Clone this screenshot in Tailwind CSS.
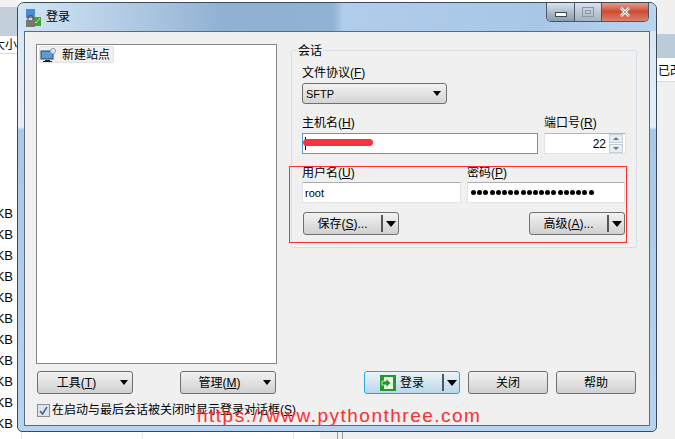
<!DOCTYPE html>
<html lang="en">
<head>
    <meta charset="UTF-8">
    <title>登录</title>
    <script src="https://cdn.jsdelivr.net/npm/@tailwindcss/browser@4"></script>
</head>
<body class="relative w-[675px] h-[439px] overflow-hidden bg-white text-black text-[12px] leading-[14px] font-['Liberation_Sans','Noto_Sans_CJK_SC',sans-serif]">

    <!-- File manager behind the dialog, left side -->
    <div class="absolute left-0 top-0 w-[17px] h-[439px] flex flex-col">
        <div class="h-[7px] bg-[#f2f2f2]"></div>
        <div class="h-[29px] bg-[#c3cfda]"></div>
        <div class="h-[18px] bg-white border-b border-[#d8d8d8] overflow-hidden whitespace-nowrap flex justify-end items-center">大小</div>
        <div class="flex flex-col pt-[149px] items-end pr-[4px] text-[13px]">
            <span class="h-[21px] leading-[21px]">KB</span>
            <span class="h-[21px] leading-[21px]">KB</span>
            <span class="h-[21px] leading-[21px]">KB</span>
            <span class="h-[21px] leading-[21px]">KB</span>
            <span class="h-[21px] leading-[21px]">KB</span>
            <span class="h-[21px] leading-[21px]">KB</span>
            <span class="h-[21px] leading-[21px]">KB</span>
            <span class="h-[21px] leading-[21px]">KB</span>
            <span class="h-[21px] leading-[21px]">KB</span>
            <span class="h-[21px] leading-[21px]">KB</span>
            <span class="h-[21px] leading-[21px]">KB</span>
        </div>
    </div>

    <!-- Right side -->
    <div class="absolute left-[656px] top-0 w-[19px] h-[439px] flex flex-col bg-[#f0f0f0]">
        <div class="h-[34px]"></div>
        <div class="h-[24px] bg-[#bccbd9]"></div>
        <div class="h-[24px] bg-white border-b border-[#d8d8d8] overflow-hidden whitespace-nowrap pl-[2px] pt-[6px]">已改</div>
    </div>

    <!-- Strip below the dialog, with the list's column lines -->
    <div class="absolute left-0 top-[432px] w-[675px] h-[7px] flex">
        <div class="w-[22px] border-r border-[#e6e6e6]"></div>
        <div class="w-[121px] border-r border-[#e6e6e6]"></div>
        <div class="w-[151px] border-r border-[#e6e6e6]"></div>
        <div class="w-[26px]"></div>
        <div class="flex-1 bg-[#f0f0f0] flex pl-[17px] gap-[4px]">
            <div class="w-px bg-[#9a9a9a]"></div>
            <div class="w-px bg-[#9a9a9a]"></div>
        </div>
    </div>

    <!-- Dialog -->
    <div class="absolute left-[17px] top-[2px] w-[640px] h-[430px] rounded-t-[7px] rounded-b-[5px] border border-[#3c4a58] overflow-hidden bg-[linear-gradient(to_bottom,#d6e6f5_0,#e4eef7_124px,#a8c8e8_127px,#b6d4f2_100%)] flex flex-col px-[6px] pb-[6px]">
        <!-- Title bar -->
        <div class="h-[28px] -mx-[6px] px-[6px] flex items-center shrink-0 relative bg-[linear-gradient(to_right,#d3e5f5_0,#b4cde5_100px,#8fb0d2_210px,#90b2d5_315px,#b0cdeb_325px,#a8c6e6_520px,#b8d4ee_100%)]">
            <svg class="ml-[1px] mt-[1px]" width="17" height="20" viewBox="0 0 17 20">
                <rect x="1" y="1" width="9" height="9" fill="#4a88d8"/>
                <path d="M8 9h8v9H7z" fill="#3fa52e"/>
                <path d="M9 13l2 2 4-5" stroke="#bfe8a8" fill="none"/>
                <path d="M3 12v-2a2.5 2.5 0 0 1 5 0v2" fill="none" stroke="#555" stroke-width="1.2"/>
                <rect x="1" y="12" width="9" height="7" fill="#777"/>
            </svg>
            <span class="ml-[4px]">登录</span>
            <!-- Caption buttons -->
            <div class="absolute right-[7px] -top-[1px] w-[103px] h-[20px] flex rounded-b-[5px] border border-t-0 border-[#4a5663] overflow-hidden">
                <div class="w-[28px] border-r border-[#4a5663] bg-gradient-to-b from-[#dbe6ef] to-[#8c9cab] flex items-center justify-center">
                    <div class="w-[12px] h-[5px] mt-[5px] bg-white border border-[#3c4a58]"></div>
                </div>
                <div class="w-[27px] border-r border-[#4a5663] bg-gradient-to-b from-[#dbe6ef] to-[#a2b2c1] flex items-center justify-center">
                    <div class="w-[12px] h-[10px] border border-[#8a98a6] flex items-center justify-center"><div class="w-[6px] h-[4px] border border-[#8a98a6]"></div></div>
                </div>
                <div class="flex-1 bg-gradient-to-b from-[#e6a596] via-[#cf4b32] to-[#d9806a] flex items-center justify-center">
                    <svg width="12" height="10" viewBox="0 0 12 10"><path d="M2 1l8 8M10 1l-8 8" stroke="#fff" stroke-width="2.6" /><path d="M2 1l8 8M10 1l-8 8" stroke="#3d4d5a" stroke-width="0.5"/></svg>
                </div>
            </div>
        </div>

        <!-- Client area -->
        <div class="flex-1 border border-[#5d6a77] bg-[#f0f0f0] flex flex-col px-[11px] pt-[12px] pb-[8px] relative">
            <div class="flex">
                <!-- Site tree -->
                <div class="w-[241px] h-[320px] shrink-0 bg-white border border-[#828790] pt-[1px] pl-[2px]">
                    <div class="inline-flex items-center h-[17px] pr-[3px] rounded-[2px] bg-[#f0f0f0] border border-[#e2e2e2]">
                        <svg class="mr-[4px]" width="18" height="16" viewBox="0 0 18 16">
                            <rect x="1" y="4" width="12" height="8" fill="#5b9bd8" stroke="#33475c"/>
                            <path d="M5 13h5v1h2v1H3v-1h2z" fill="#222"/>
                            <circle cx="13" cy="4" r="2.6" fill="#dfe8f2" stroke="#8aa2bb"/>
                        </svg>
                        <span>新建站点</span>
                    </div>
                </div>

                <!-- Session group -->
                <div class="ml-[14px] mt-[6px] w-[346px] h-[198px] rounded-[2px] border border-[#d5dfe5] relative pl-[10px] pt-[15px] flex flex-col">
                    <span class="absolute left-[5px] -top-[7px] bg-[#f0f0f0] px-[1px]">会话</span>
                    <label class="h-[16px] block">文件协议(<u>F</u>)</label>
                    <div class="mt-px w-[145px] h-[21px] rounded-[3px] border border-[#707070] bg-gradient-to-b from-[#f2f2f2] to-[#d4d4d4] flex items-center justify-between px-[3px] pr-[5px] font-['Liberation_Sans'] text-[11px]">
                        <span>SFTP</span>
                        <span class="w-0 h-0 border-x-[4px] border-x-transparent border-t-[5px] border-t-black"></span>
                    </div>
                    <div class="mt-[12px] flex gap-[6px]">
                        <div class="flex flex-col w-[236px]">
                            <label class="h-[17px]">主机名(<u>H</u>)</label>
                            <div class="h-[21px] border border-[#5a9bc9] bg-white relative overflow-hidden">
                                <div class="w-px h-[13px] bg-black ml-[2px] mt-[3px]"></div>
                                <div class="absolute left-0 top-[5px] w-[70px] h-[7px] rounded-full bg-[#f8333c]"></div>
                            </div>
                        </div>
                        <div class="flex flex-col w-[82px]">
                            <label class="h-[17px]">端口号(<u>R</u>)</label>
                            <div class="h-[21px] border border-[#dfe3e8] border-t-[#b5b9bd] bg-white flex items-center justify-end pr-[2px]">
                                <span class="mr-[3px]">22</span>
                                <div class="w-[14px] h-[19px] flex flex-col gap-px">
                                    <div class="flex-1 bg-[#e8edf3] border border-[#c4ccd6] flex items-center justify-center"><span class="w-0 h-0 border-x-[3px] border-x-transparent border-b-[3px] border-b-[#6a7a8c]"></span></div>
                                    <div class="flex-1 bg-[#e8edf3] border border-[#c4ccd6] flex items-center justify-center"><span class="w-0 h-0 border-x-[3px] border-x-transparent border-t-[3px] border-t-[#6a7a8c]"></span></div>
                                </div>
                            </div>
                        </div>
                    </div>
                    <div class="mt-[12px] flex gap-[6px]">
                        <div class="flex flex-col w-[159px]">
                            <label class="h-[16px]">用户名(<u>U</u>)</label>
                            <div class="h-[21px] border border-[#dfe3e8] border-t-[#abadb3] bg-white flex items-center pl-[2px] font-['Liberation_Sans'] text-[11px]">root</div>
                        </div>
                        <div class="flex flex-col w-[158px]">
                            <label class="h-[16px]">密码(<u>P</u>)</label>
                            <div class="h-[21px] border border-[#dfe3e8] border-t-[#abadb3] bg-white flex items-center pl-[3px]">
                                <span class="flex gap-[1.2px]">
                                    <i class="size-[5px] rounded-full bg-black"></i><i class="size-[5px] rounded-full bg-black"></i><i class="size-[5px] rounded-full bg-black"></i><i class="size-[5px] rounded-full bg-black"></i><i class="size-[5px] rounded-full bg-black"></i><i class="size-[5px] rounded-full bg-black"></i><i class="size-[5px] rounded-full bg-black"></i><i class="size-[5px] rounded-full bg-black"></i><i class="size-[5px] rounded-full bg-black"></i><i class="size-[5px] rounded-full bg-black"></i><i class="size-[5px] rounded-full bg-black"></i><i class="size-[5px] rounded-full bg-black"></i><i class="size-[5px] rounded-full bg-black"></i><i class="size-[5px] rounded-full bg-black"></i><i class="size-[5px] rounded-full bg-black"></i><i class="size-[5px] rounded-full bg-black"></i><i class="size-[5px] rounded-full bg-black"></i><i class="size-[5px] rounded-full bg-black"></i><i class="size-[5px] rounded-full bg-black"></i><i class="size-[5px] rounded-full bg-black"></i>
                                </span>
                            </div>
                        </div>
                    </div>
                    <div class="mt-[9px] flex justify-between w-[323px] pl-px">
                        <div class="w-[96px] h-[23px] rounded-[3px] border border-[#707070] bg-gradient-to-b from-[#f2f2f2] to-[#d0d0d0] flex items-center">
                            <span class="flex-1 text-center">保存(<u>S</u>)...</span>
                            <span class="w-[2px] h-[17px] bg-[#555]"></span>
                            <span class="w-[15px] flex justify-center"><span class="w-0 h-0 border-x-[5px] border-x-transparent border-t-[6px] border-t-black"></span></span>
                        </div>
                        <div class="w-[96px] h-[23px] rounded-[3px] border border-[#707070] bg-gradient-to-b from-[#f2f2f2] to-[#d0d0d0] flex items-center">
                            <span class="flex-1 text-center">高级(<u>A</u>)...</span>
                            <span class="w-[2px] h-[17px] bg-[#555]"></span>
                            <span class="w-[15px] flex justify-center"><span class="w-0 h-0 border-x-[5px] border-x-transparent border-t-[6px] border-t-black"></span></span>
                        </div>
                    </div>
                </div>
            </div>

            <!-- Bottom buttons -->
            <div class="mt-[7px] flex items-center h-[23px]">
                <div class="ml-px w-[96px] h-[23px] rounded-[3px] border border-[#707070] bg-gradient-to-b from-[#f2f2f2] to-[#d0d0d0] flex items-center relative">
                    <span class="w-[70px] text-center pl-[7px]">工具(<u>T</u>)</span>
                    <span class="absolute right-[4px] w-0 h-0 border-x-[4px] border-x-transparent border-t-[5px] border-t-black"></span>
                </div>
                <div class="ml-[47px] w-[96px] h-[23px] rounded-[3px] border border-[#707070] bg-gradient-to-b from-[#f2f2f2] to-[#d0d0d0] flex items-center relative">
                    <span class="w-[70px] text-center pl-[7px]">管理(<u>M</u>)</span>
                    <span class="absolute right-[4px] w-0 h-0 border-x-[4px] border-x-transparent border-t-[5px] border-t-black"></span>
                </div>
                <div class="ml-[88px] w-[96px] h-[23px] rounded-[3px] border border-[#2ca3dd] bg-gradient-to-b from-[#ebf4fb] to-[#b9d7ea] flex items-center">
                    <svg class="ml-[15px]" width="16" height="16" viewBox="0 0 16 16">
                        <rect width="16" height="16" fill="#1f9a2b"/>
                        <rect x="4" y="2" width="9" height="12" fill="#e8f5e4"/>
                        <path d="M2 6h4V3.5L11 8l-5 4.500V10H2z" fill="#1f9a2b" stroke="#e8f5e4" stroke-width="0.8"/>
                    </svg>
                    <span class="ml-[4px] flex-1">登录</span>
                    <span class="w-[2px] h-[17px] bg-[#555]"></span>
                    <span class="w-[15px] flex justify-center"><span class="w-0 h-0 border-x-[5px] border-x-transparent border-t-[6px] border-t-black"></span></span>
                </div>
                <div class="ml-[8px] w-[80px] h-[23px] rounded-[3px] border border-[#707070] bg-gradient-to-b from-[#f2f2f2] to-[#d0d0d0] flex items-center justify-center">关闭</div>
                <div class="ml-[8px] w-[80px] h-[23px] rounded-[3px] border border-[#707070] bg-gradient-to-b from-[#f2f2f2] to-[#d0d0d0] flex items-center justify-center">帮助</div>
            </div>

            <!-- Checkbox row -->
            <div class="mt-[9px] ml-px flex items-center h-[14px]">
                <span class="size-[13px] border border-[#8e8f8f] bg-[#dce4f0] flex items-center justify-center">
                    <svg width="9" height="9" viewBox="0 0 9 9"><path d="M1 5l2.500 3L8 1" fill="none" stroke="#4a5f97" stroke-width="1.6"/></svg>
                </span>
                <span class="ml-[2px]">在启动与最后会话被关闭时显示登录对话框(<u>S</u>)</span>
            </div>
        </div>
    </div>

    <!-- Red annotation box -->
    <div class="absolute left-[289px] top-[166px] w-[338px] h-[77px] border border-[#ff2d2d]"></div>

    <!-- Watermark -->
    <div class="absolute left-[197px] top-[404px] text-[#fb2e2e] text-[19px] leading-[24px] tracking-[1.5px] whitespace-nowrap font-['Liberation_Sans']">https://www.pythonthree.com</div>
</body>
</html>
